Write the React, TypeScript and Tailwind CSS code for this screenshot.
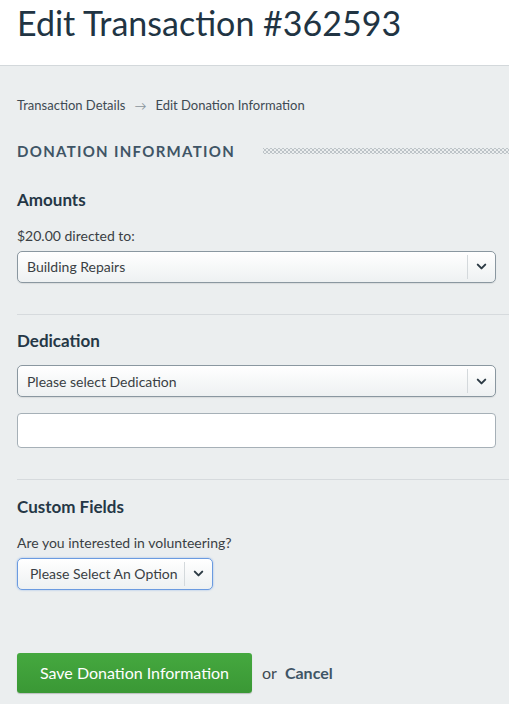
import { ChevronDown } from "lucide-react";

const font = { fontFamily: "Lato, 'Open Sans', Arial, sans-serif" };

function SelectBox({ value, wide = true, focused = false }: { value: string; wide?: boolean; focused?: boolean }) {
  return (
    <div
      className={
        "flex items-center h-[32px] rounded-[5px] bg-gradient-to-b from-white to-[#eef1f2] " +
        (wide ? "w-full " : "w-[196px] ") +
        (focused
          ? "border border-[#6b9be0] shadow-[0_0_2px_rgba(80,140,230,0.6)]"
          : "border border-[#8a97a0] shadow-[0_1px_1px_rgba(0,0,0,0.08)]")
      }
    >
      <span className={"flex-1 text-[14px] text-[#3a3f44] truncate " + (focused ? "pl-[12px]" : "pl-[9px]")}>{value}</span>
      <div className="h-[24px] w-px bg-[#d4d9dc]" />
      <div className="w-[27px] flex items-center justify-center">
        <ChevronDown size={15} strokeWidth={3.2} className="text-[#2d3b45]" />
      </div>
    </div>
  );
}

export default function App() {
  return (
    <div style={font} className="w-[509px] h-[704px] overflow-hidden bg-[#ebeeef] text-[#2d3b45]">
      {/* Header */}
      <header className="bg-white h-[66px] border-b border-[#d3d8db] px-[17px]">
        <h1 className="text-[34px] leading-[44px] text-[#213443] pt-[1px]">Edit Transaction #362593</h1>
      </header>

      <main className="pl-[17px] pr-[13px]">
        {/* Breadcrumb */}
        <nav className="flex items-center gap-[9px] text-[13px] text-[#3e4a53] pt-[30px]">
          <span>Transaction Details</span>
          <span className="text-[#8a959c] text-[12px]">→</span>
          <span>Edit Donation Information</span>
        </nav>

        {/* Section title */}
        <div className="flex items-center mt-[24px] -mr-[13px]">
          <h2 className="text-[15px] font-bold tracking-[1.3px] text-[#3f5566] whitespace-nowrap">DONATION INFORMATION</h2>
          <div className="flex-1 ml-[28px] h-[6px] bg-[radial-gradient(circle,#a3acb2_0.6px,transparent_0.9px),radial-gradient(circle,#a3acb2_0.6px,transparent_0.9px)] bg-[length:4px_4px] bg-[position:0_0,2px_2px]" />
        </div>

        {/* Amounts */}
        <section className="pt-[25px] pb-[31px] border-b border-[#d6dadd] -mr-[13px] pr-[13px]">
          <h3 className="text-[17px] font-bold text-[#253746]">Amounts</h3>
          <p className="text-[14px] text-[#3a3f44] mt-[12px] mb-[5px]">$20.00 directed to:</p>
          <SelectBox value="Building Repairs" />
        </section>

        {/* Dedication */}
        <section className="pt-[13px] pb-[31px] border-b border-[#d6dadd] -mr-[13px] pr-[13px]">
          <h3 className="text-[17px] font-bold text-[#253746]">Dedication</h3>
          <div className="mt-[12px]">
            <SelectBox value="Please select Dedication" />
          </div>
          <div className="mt-[16px] h-[35px] rounded-[4px] bg-white border border-[#a6b0b7]" />
        </section>

        {/* Custom Fields */}
        <section className="pt-[14px]">
          <h3 className="text-[17px] font-bold text-[#253746]">Custom Fields</h3>
          <p className="text-[14px] text-[#3a3f44] mt-[12px] mb-[5px]">Are you interested in volunteering?</p>
          <SelectBox value="Please Select An Option" wide={false} focused />
        </section>

        {/* Actions */}
        <div className="flex items-center mt-[63px]">
          <button className="h-[40px] w-[235px] rounded-[3px] bg-gradient-to-b from-[#45a83f] to-[#3a9835] text-white text-[16px] shadow-[0_1px_1px_rgba(0,0,0,0.2)]">
            Save Donation Information
          </button>
          <span className="ml-[10px] text-[16px] text-[#3e4a53]">or</span>
          <a className="ml-[8px] text-[16px] font-bold text-[#3f5566]">Cancel</a>
        </div>
      </main>
    </div>
  );
}
